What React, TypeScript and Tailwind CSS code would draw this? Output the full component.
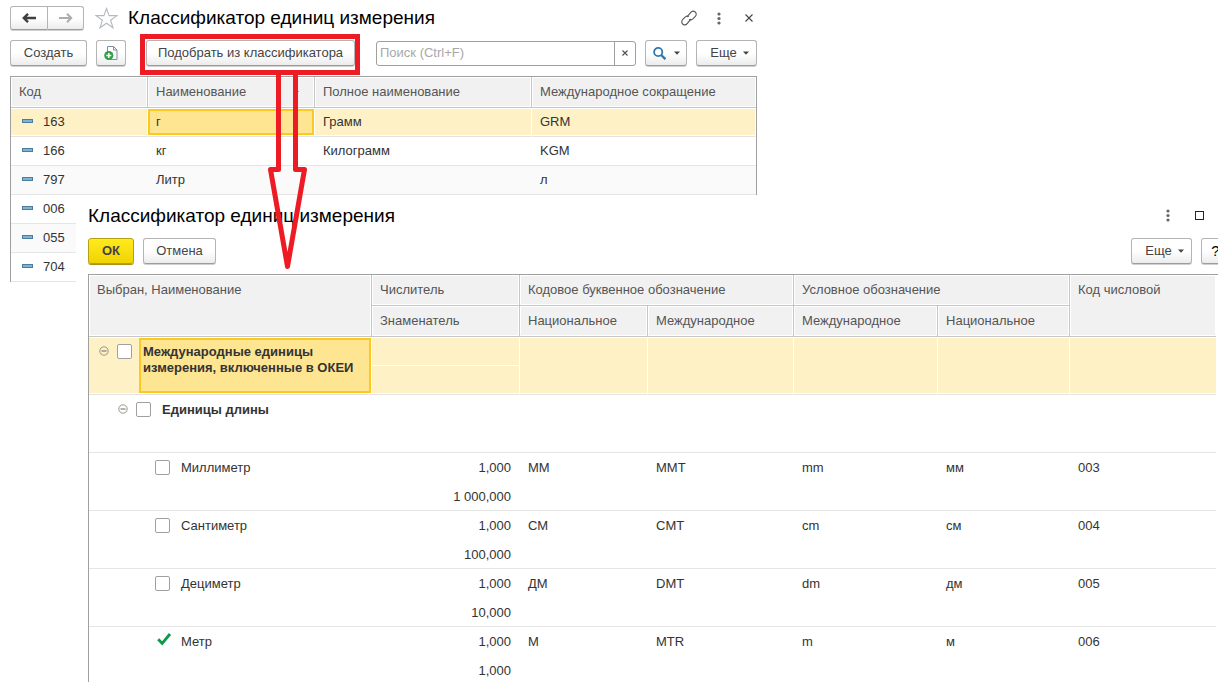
import type { ReactNode } from 'react'

interface Unit {
  code: string
  name: string
  fullName: string
  intl: string
}

interface ClassifierRow {
  name: string
  numerator: string
  denominator: string
  natCode: string
  intCode: string
  intSymbol: string
  natSymbol: string
  numCode: string
  checked?: boolean
}

const units: Unit[] = [
  { code: '163', name: 'г', fullName: 'Грамм', intl: 'GRM' },
  { code: '166', name: 'кг', fullName: 'Килограмм', intl: 'KGM' },
  { code: '797', name: 'Литр', fullName: '', intl: 'л' },
  { code: '006', name: '', fullName: '', intl: '' },
  { code: '055', name: '', fullName: '', intl: '' },
  { code: '704', name: '', fullName: '', intl: '' },
]

const classifier: ClassifierRow[] = [
  { name: 'Миллиметр', numerator: '1,000', denominator: '1 000,000', natCode: 'ММ', intCode: 'MMT', intSymbol: 'mm', natSymbol: 'мм', numCode: '003' },
  { name: 'Сантиметр', numerator: '1,000', denominator: '100,000', natCode: 'СМ', intCode: 'CMT', intSymbol: 'cm', natSymbol: 'см', numCode: '004' },
  { name: 'Дециметр', numerator: '1,000', denominator: '10,000', natCode: 'ДМ', intCode: 'DMT', intSymbol: 'dm', natSymbol: 'дм', numCode: '005' },
  { name: 'Метр', numerator: '1,000', denominator: '1,000', natCode: 'М', intCode: 'MTR', intSymbol: 'm', natSymbol: 'м', numCode: '006', checked: true },
]

const buttonBase =
  'flex shrink-0 items-center justify-center rounded-[3px] border border-[#b4b4b4] border-b-[#9c9c9c] bg-linear-to-b from-white from-50% to-[#ececec] text-[#444] shadow-[0_1px_0_#d0d0d0]'

const headCell =
  'border-r border-b border-[#c6c6c6] bg-[#f1f1f1] px-2 text-left align-top font-normal leading-[29px] text-[#555] shadow-[inset_0_0_0_1px_#fff]'

const yellowCell =
  'border-r border-b border-r-white border-b-[#e3e3e3] bg-[#fef1c5] shadow-[inset_0_1px_0_#fff,inset_0_-1px_0_#fff]'

const bodyCell = 'border-b border-[#e5e5e5] px-2 align-top leading-[29px]'

const unitCell = 'border-b border-[#e5e5e5] px-2 leading-[28px]'

function Caret() {
  return (
    <svg className="h-[4px] w-[6px]" viewBox="0 0 6 4" aria-hidden="true">
      <path d="M0 0.5h6L3 3.7z" fill="#444" />
    </svg>
  )
}

function DotsIcon() {
  return (
    <svg className="h-[13px] w-[4px]" viewBox="0 0 4 13" fill="#666" aria-hidden="true">
      <circle cx="2" cy="2" r="1.6" />
      <circle cx="2" cy="6.5" r="1.6" />
      <circle cx="2" cy="11" r="1.6" />
    </svg>
  )
}

function MoreButton() {
  return (
    <button type="button" className={`${buttonBase} h-[26px] w-[61px] gap-[6px] pl-[6px]`}>
      Еще
      <Caret />
    </button>
  )
}

function CollapseButton() {
  return (
    <button type="button" aria-label="Свернуть" className="mt-[9px] h-[10px] w-[10px] shrink-0">
      <svg className="h-[10px] w-[10px]" viewBox="0 0 10 10" fill="none" stroke="#8f8a7c" aria-hidden="true">
        <circle cx="5" cy="5" r="4.2" strokeWidth="0.9" />
        <path d="M2.5 5h5" stroke="#666" />
      </svg>
    </button>
  )
}

function Checkbox({ id, checked }: { id: string; checked?: boolean }) {
  return (
    <span className="mt-[7px] grid h-[15px] w-[15px] shrink-0">
      <input
        id={id}
        type="checkbox"
        defaultChecked={checked}
        className="peer col-start-1 row-start-1 h-[15px] w-[15px] appearance-none rounded-[2px] border border-[#a0a0a0] bg-white checked:border-transparent checked:bg-transparent"
      />
      <svg
        className="pointer-events-none invisible col-start-1 row-start-1 h-[15px] w-[15px] overflow-visible peer-checked:visible"
        viewBox="0 0 15 15"
        fill="none"
        stroke="#0a9a48"
        strokeWidth="2.8"
        aria-hidden="true"
      >
        <path d="M3.2 5.2L7.2 9.4L15 0" />
      </svg>
    </span>
  )
}

function UnitsWindow() {
  return (
    <section className="max-w-[767px] px-[10px] pt-[6px]">
      <header className="flex h-[24px] items-center">
        <div className="flex">
          <button type="button" aria-label="Назад" className={`${buttonBase} h-[24px] w-[38px] rounded-r-none`}>
            <svg className="h-[10px] w-[14px]" viewBox="0 0 14 10" fill="none" stroke="#3f3f3f" strokeWidth="2.4" aria-hidden="true">
              <path d="M14 5H2M6 0.8L1.8 5L6 9.2" />
            </svg>
          </button>
          <button type="button" aria-label="Вперед" className={`${buttonBase} h-[24px] w-[36px] rounded-l-none border-l-0`}>
            <svg className="h-[10px] w-[14px]" viewBox="0 0 14 10" fill="none" stroke="#adadad" strokeWidth="2" aria-hidden="true">
              <path d="M0 5H12M8 0.8L12.2 5L8 9.2" />
            </svg>
          </button>
        </div>
        <button type="button" aria-label="В избранное" className="ml-[11px]">
          <svg className="h-[22px] w-[23px]" viewBox="0 0 23 22" fill="none" stroke="#b3bac1" strokeWidth="1.1" aria-hidden="true">
            <path d="M11.5 1.5L14.1 8.6H22L15.6 13.2L18 20.8L11.5 16.2L5 20.8L7.4 13.2L1 8.6H8.9Z" />
          </svg>
        </button>
        <h1 className="ml-[10px] text-[19px] leading-6 text-black">Классификатор единиц измерения</h1>
        <div className="ml-auto flex items-center pr-1">
          <button type="button" aria-label="Ссылка">
            <svg className="h-[16px] w-[16px]" viewBox="0 0 16 16" fill="none" stroke="#555" strokeWidth="1.1" strokeLinecap="round" aria-hidden="true">
              <path d="M6.2 6.6L9.6 2.6C10.8 1.2 12.6 0.7 14 1.8C15.6 3 15.5 5 14.4 6.3L11.6 9.2C10.7 10 9.4 10.2 8.5 9.6" />
              <path d="M9.6 9.4L6.4 13.3C5.2 14.8 3.3 15.3 1.9 14.2C0.4 13 0.5 11 1.6 9.7L4.4 6.8C5.3 6 6.5 5.8 7.4 6.4" />
            </svg>
          </button>
          <button type="button" aria-label="Меню" className="ml-[20px]">
            <DotsIcon />
          </button>
          <button type="button" aria-label="Закрыть" className="ml-[24px]">
            <svg className="h-[8px] w-[8px]" viewBox="0 0 8 8" stroke="#444" strokeWidth="1.1" aria-hidden="true">
              <path d="M0.5 0.5L7.5 7.5M7.5 0.5L0.5 7.5" />
            </svg>
          </button>
        </div>
      </header>

      <div className="mt-[10px] flex h-[26px] items-center">
        <button type="button" className={`${buttonBase} h-[26px] w-[77px]`}>
          Создать
        </button>
        <button type="button" aria-label="Создать копированием" className={`${buttonBase} ml-[9px] h-[26px] w-[30px]`}>
          <svg className="h-[16px] w-[14px]" viewBox="0 0 14 16" aria-hidden="true">
            <path d="M3.5 1.5H9.5L13 5V14.5H3.5Z" fill="#fff" stroke="#7b8ea3" />
            <path d="M9.5 1.5V5H13" fill="none" stroke="#7b8ea3" />
            <circle cx="4.8" cy="10.5" r="4.6" fill="#2fa148" />
            <path d="M4.8 8v5M2.3 10.5h5" stroke="#fff" strokeWidth="1.5" />
          </svg>
        </button>
        <button type="button" className={`${buttonBase} ml-[20px] h-[26px] w-[209px]`}>
          Подобрать из классификатора
        </button>
        <div className="ml-[21px] flex h-[25px] min-w-0 flex-1 rounded-[3px] border border-[#a0a0a0] bg-white">
          <input
            type="search"
            aria-label="Поиск"
            placeholder="Поиск (Ctrl+F)"
            className="min-w-0 flex-1 px-[3px] outline-none placeholder:text-[#a8a8a8]"
          />
          <button type="button" aria-label="Очистить" className="flex w-[21px] items-center justify-center border-l border-[#a0a0a0]">
            <svg className="h-[6px] w-[6px]" viewBox="0 0 6 6" stroke="#555" strokeWidth="1.2" aria-hidden="true">
              <path d="M0.5 0.5L5.5 5.5M5.5 0.5L0.5 5.5" />
            </svg>
          </button>
        </div>
        <button type="button" aria-label="Найти" className={`${buttonBase} ml-[9px] mr-[9px] h-[26px] w-[42px] gap-[8px]`}>
          <svg className="h-[13px] w-[13px]" viewBox="0 0 13 13" fill="none" stroke="#2f78b3" aria-hidden="true">
            <circle cx="5.2" cy="5" r="4.1" strokeWidth="1.8" />
            <path d="M8.2 8L12.4 12.2" strokeWidth="2.4" />
          </svg>
          <Caret />
        </button>
        <MoreButton />
      </div>

      <table className="mt-[10px] w-full table-fixed border-separate border-spacing-0 border-x border-t border-[#a0a0a0]">
        <colgroup>
          <col className="w-[137px]" />
          <col className="w-[167px]" />
          <col className="w-[217px]" />
          <col />
        </colgroup>
        <thead>
          <tr className="h-[31px]">
            <th className={headCell}>Код</th>
            <th className={headCell}>
              <span className="flex items-center justify-between pr-[7px]">
                Наименование
                <svg className="h-[4px] w-[5px]" viewBox="0 0 5 4" aria-hidden="true">
                  <path d="M0 1h5L2.5 3.5z" fill="#555" />
                </svg>
              </span>
            </th>
            <th className={headCell}>Полное наименование</th>
            <th className={`${headCell} border-r-0`}>Международное сокращение</th>
          </tr>
        </thead>
        <tbody>
          {units.map((unit, index) => {
            const selected = index === 0
            const cell = selected ? `${yellowCell} px-2` : unitCell
            return (
              <tr key={unit.code} className={index % 2 === 0 ? 'h-[29px] bg-[#fafafa]' : 'h-[29px]'}>
                <td className={cell}>
                  <span className="flex items-center gap-[10px] pl-[3px] leading-[28px]">
                    <svg className="mb-[2px] h-[4px] w-[11px]" viewBox="0 0 11 4" aria-hidden="true">
                      <rect x="0.5" y="0.5" width="10" height="3" fill="#7fb2d3" stroke="#4c7d9e" />
                    </svg>
                    {unit.code}
                  </span>
                </td>
                {selected ? (
                  <td className={`${yellowCell} py-px`}>
                    <span className="flex h-[26px] items-center border-2 border-[#fbc91f] bg-[#fee592] px-[6px]">{unit.name}</span>
                  </td>
                ) : (
                  <td className={cell}>{unit.name}</td>
                )}
                <td className={cell}>{unit.fullName}</td>
                <td className={cell}>{unit.intl}</td>
              </tr>
            )
          })}
        </tbody>
      </table>
    </section>
  )
}

function GroupCells() {
  return (
    <>
      {['num', 'nat', 'int', 'intSym', 'natSym', 'code'].map((key) => (
        <td key={key} className={bodyCell} />
      ))}
    </>
  )
}

function TextCell({ children }: { children: ReactNode }) {
  return <td className={bodyCell}>{children}</td>
}

function ClassifierWindow() {
  return (
    <section className="absolute top-[195px] right-0 bottom-0 left-[76px] overflow-hidden bg-white pl-[12px]">
      <header className="flex h-[41px] items-center">
        <h2 className="text-[19px] leading-6 text-black">Классификатор единиц измерения</h2>
        <button type="button" aria-label="Меню" className="ml-auto">
          <DotsIcon />
        </button>
        <button type="button" aria-label="Развернуть" className="mr-[14px] ml-[25px] h-[9px] w-[9px] border border-[#222]" />
      </header>

      <div className="mt-[2px] flex gap-[9px]">
        <button
          type="button"
          className="h-[26px] w-[46px] rounded-[3px] border border-[#b5a013] bg-linear-to-b from-[#ffea1c] to-[#f0d400] font-bold text-[#444] shadow-[0_1px_0_#a8941a]"
        >
          ОК
        </button>
        <button type="button" className={`${buttonBase} h-[26px] w-[73px]`}>
          Отмена
        </button>
        <div className="-mr-[12px] ml-auto flex gap-[9px]">
          <MoreButton />
          <button type="button" aria-label="Справка" className={`${buttonBase} h-[26px] w-[29px] text-[15px] text-black`}>
            ?
          </button>
        </div>
      </div>

      <div className="mt-[10px] border-t border-l border-[#a0a0a0] pr-[2px]">
        <table className="w-full table-fixed border-separate border-spacing-0">
          <colgroup>
            <col className="w-[283px]" />
            <col className="w-[148px]" />
            <col className="w-[128px]" />
            <col className="w-[146px]" />
            <col className="w-[144px]" />
            <col className="w-[132px]" />
            <col />
          </colgroup>
          <thead>
            <tr className="h-[31px]">
              <th rowSpan={2} className={headCell}>Выбран, Наименование</th>
              <th className={headCell}>Числитель</th>
              <th colSpan={2} className={headCell}>Кодовое буквенное обозначение</th>
              <th colSpan={2} className={headCell}>Условное обозначение</th>
              <th rowSpan={2} className={`${headCell} border-r-0`}>Код числовой</th>
            </tr>
            <tr className="h-[31px]">
              <th className={headCell}>Знаменатель</th>
              <th className={headCell}>Национальное</th>
              <th className={headCell}>Международное</th>
              <th className={headCell}>Международное</th>
              <th className={headCell}>Национальное</th>
            </tr>
          </thead>
          <tbody>
            <tr className="h-[58px]">
              <td className={`${yellowCell} align-top`}>
                <div className="flex pl-[10px]">
                  <div className="flex gap-[8px] pr-[7px]">
                    <CollapseButton />
                    <Checkbox id="group-okei" />
                  </div>
                  <label
                    htmlFor="group-okei"
                    className="my-px h-[55px] flex-1 border-2 border-[#fbc91f] bg-[#fee592] px-[2px] pt-[4px] leading-4 font-bold"
                  >
                    Международные единицы измерения, включенные в ОКЕИ
                  </label>
                </div>
              </td>
              <td className={`${yellowCell} align-top`}>
                <div className="h-[29px] border-b border-white" />
              </td>
              <td className={yellowCell} />
              <td className={yellowCell} />
              <td className={yellowCell} />
              <td className={yellowCell} />
              <td className={`${yellowCell} border-r-0`} />
            </tr>
            <tr className="h-[58px]">
              <td className="border-b border-[#e5e5e5] align-top">
                <div className="flex gap-[8px] pl-[29px]">
                  <CollapseButton />
                  <Checkbox id="group-length" />
                  <label htmlFor="group-length" className="pl-[3px] leading-[29px] font-bold">
                    Единицы длины
                  </label>
                </div>
              </td>
              <GroupCells />
            </tr>
            {classifier.map((row) => (
              <tr key={row.numCode} className="h-[58px]">
                <td className="border-b border-[#e5e5e5] align-top">
                  <div className="flex gap-[11px] pl-[66px]">
                    <Checkbox id={`unit-${row.numCode}`} checked={row.checked} />
                    <label htmlFor={`unit-${row.numCode}`} className="leading-[29px]">
                      {row.name}
                    </label>
                  </div>
                </td>
                <td className="border-b border-[#e5e5e5] pr-[9px] text-right align-top">
                  <div className="h-[29px] leading-[29px]">{row.numerator}</div>
                  <div className="h-[28px] leading-[29px]">{row.denominator}</div>
                </td>
                <TextCell>{row.natCode}</TextCell>
                <TextCell>{row.intCode}</TextCell>
                <TextCell>{row.intSymbol}</TextCell>
                <TextCell>{row.natSymbol}</TextCell>
                <TextCell>{row.numCode}</TextCell>
              </tr>
            ))}
          </tbody>
        </table>
      </div>
    </section>
  )
}

// Красная рамка вокруг кнопки и стрелка к окну подбора
function Annotation() {
  return (
    <svg
      className="pointer-events-none absolute top-0 left-0 h-[280px] w-[370px]"
      viewBox="0 0 370 280"
      fill="none"
      stroke="#ed1c24"
      strokeWidth="5"
      aria-hidden="true"
    >
      <rect x="142.5" y="36.5" width="215" height="36" />
      <path d="M278.5 74V169.5H270.5L287.5 266.5L304.5 169.5H295.5V74" strokeLinejoin="round" />
    </svg>
  )
}

export default function App() {
  return (
    <main className="relative h-screen overflow-hidden bg-white font-['Liberation_Sans',Arial,sans-serif] text-[13px] text-[#333]">
      <UnitsWindow />
      <ClassifierWindow />
      <Annotation />
    </main>
  )
}
